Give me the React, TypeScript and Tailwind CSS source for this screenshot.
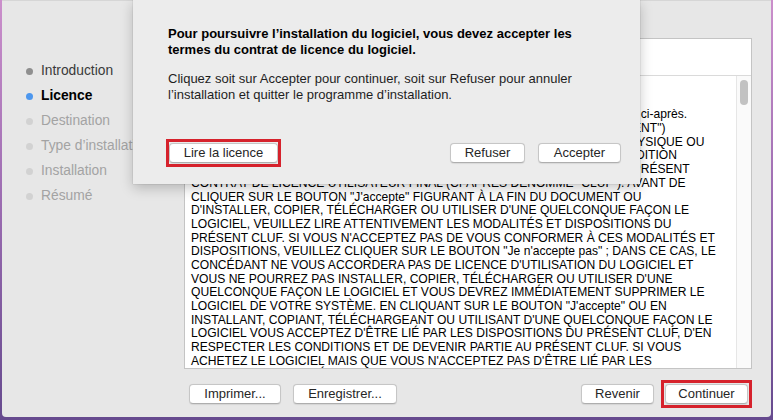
import React from "react";

const steps = [
  { label: "Introduction", state: "done" },
  { label: "Licence", state: "current" },
  { label: "Destination", state: "todo" },
  { label: "Type d’installation", state: "todo" },
  { label: "Installation", state: "todo" },
  { label: "Résumé", state: "todo" },
];

const licenceLines = [
  "CONTRAT DE LICENCE DU LOGICIEL",
  "",
  "Nous vous invitons à lire attentivement, et dans son intégralité, le contrat de licence ci-après.",
  "LE PRÉSENT CONTRAT DE LICENCE (CI-APRÈS, LE \"CONTRAT\" OU \"DOCUMENT\")",
  "CONSTITUE UN ACCORD JURIDIQUE CONCLU ENTRE VOUS (PERSONNE PHYSIQUE OU",
  "MORALE) ET LE CONCÉDANT. L'USAGE DU LOGICIEL EST SOUMIS À LA CONDITION",
  "QUE VOUS ACCEPTIEZ SANS RÉSERVE L'ENSEMBLE DES CONDITIONS DU PRÉSENT",
  "CONTRAT DE LICENCE UTILISATEUR FINAL (CI-APRÈS DÉNOMMÉ \"CLUF\"). AVANT DE",
  "CLIQUER SUR LE BOUTON \"J'accepte\" FIGURANT À LA FIN DU DOCUMENT OU",
  "D'INSTALLER, COPIER, TÉLÉCHARGER OU UTILISER D'UNE QUELCONQUE FAÇON LE",
  "LOGICIEL, VEUILLEZ LIRE ATTENTIVEMENT LES MODALITÉS ET DISPOSITIONS DU",
  "PRÉSENT CLUF. SI VOUS N'ACCEPTEZ PAS DE VOUS CONFORMER À CES MODALITÉS ET",
  "DISPOSITIONS, VEUILLEZ CLIQUER SUR LE BOUTON \"Je n'accepte pas\" ; DANS CE CAS, LE",
  "CONCÉDANT NE VOUS ACCORDERA PAS DE LICENCE D'UTILISATION DU LOGICIEL ET",
  "VOUS NE POURREZ PAS INSTALLER, COPIER, TÉLÉCHARGER OU UTILISER D'UNE",
  "QUELCONQUE FAÇON LE LOGICIEL ET VOUS DEVREZ IMMÉDIATEMENT SUPPRIMER LE",
  "LOGICIEL DE VOTRE SYSTÈME. EN CLIQUANT SUR LE BOUTON \"J'accepte\" OU EN",
  "INSTALLANT, COPIANT, TÉLÉCHARGEANT OU UTILISANT D'UNE QUELCONQUE FAÇON LE",
  "LOGICIEL VOUS ACCEPTEZ D'ÊTRE LIÉ PAR LES DISPOSITIONS DU PRÉSENT CLUF, D'EN",
  "RESPECTER LES CONDITIONS ET DE DEVENIR PARTIE AU PRÉSENT CLUF. SI VOUS",
  "ACHETEZ LE LOGICIEL MAIS QUE VOUS N'ACCEPTEZ PAS D'ÊTRE LIÉ PAR LES",
  "DISPOSITIONS DU PRÉSENT CLUF, VOUS POUVEZ LE RETOURNER.",
];

function MacButton({ children, className = "" }: { children: React.ReactNode; className?: string }) {
  return (
    <div
      className={`flex items-center justify-center h-[20px] rounded-[4px] bg-white border border-[#c6c6c6] border-b-[#aeaeae] text-[13px] text-[#262626] shadow-[0_0.5px_1px_rgba(0,0,0,0.08)] ${className}`}
    >
      {children}
    </div>
  );
}

export default function App() {
  return (
    <div
      className="w-[773px] h-[420px] bg-gradient-to-b from-[#cb8fcb] via-[#9a6bb0] to-[#664a8e] overflow-hidden"
      style={{ fontFamily: '"Liberation Sans", Arial, sans-serif' }}
    >
      <div className="relative mx-[2px] h-[417px] bg-[#e7e7e7] border-t border-[#d6d6d6] rounded-b-[4px] flex">
        {/* Sidebar */}
        <div className="w-[182px] shrink-0 pt-[58px] pl-[24px]">
          {steps.map((s) => (
            <div key={s.label} className="h-[25px] flex items-center gap-[8px] whitespace-nowrap">
              <span
                className={`w-[7px] h-[7px] rounded-full ${
                  s.state === "done" ? "bg-[#8f8f8f]" : s.state === "current" ? "bg-[#4d97ee]" : "bg-[#d2d2d2]"
                }`}
              />
              <span
                className={`text-[13.8px] ${
                  s.state === "done"
                    ? "text-[#3a3a3a]"
                    : s.state === "current"
                    ? "text-black font-bold"
                    : "text-[#a3a3a3]"
                }`}
              >
                {s.label}
              </span>
            </div>
          ))}
        </div>

        {/* Main */}
        <div className="flex-1 pt-[37px] pr-[19px] flex flex-col">
          <div className="h-[331px] bg-white border border-[#c4c4c4] flex flex-col">
            <div className="h-[37px] border-b border-[#dadada]" />
            <div className="flex-1 flex min-h-0">
              <div className="flex-1 overflow-hidden pl-[6px] pt-[5px] text-[12.1px] leading-[13.7px] text-black">
                {licenceLines.map((l, i) => (
                  <div key={i} className="whitespace-nowrap h-[13.7px]">
                    {l}
                  </div>
                ))}
              </div>
              <div className="w-[15px] bg-[#fafafa] border-l border-[#e6e6e6] pt-[4px] flex justify-center">
                <div className="w-[8px] h-[25px] rounded-full bg-[#c2c2c2]" />
              </div>
            </div>
          </div>

          <div className="mt-[11px] flex items-center">
            <MacButton className="w-[92px] ml-[5px]">Imprimer...</MacButton>
            <MacButton className="w-[104px] ml-[12px]">Enregistrer...</MacButton>
            <MacButton className="w-[73px] ml-auto">Revenir</MacButton>
            <div className="ml-[7px] border-[3px] border-[#d6222c] px-[1px] py-[1px]">
              <MacButton className="w-[83px]">Continuer</MacButton>
            </div>
          </div>
        </div>

        {/* Sheet */}
        <div className="absolute left-[131px] top-[-1px] w-[507px] h-[184px] bg-[#ececec] shadow-[0_4px_12px_rgba(0,0,0,0.22),0_0_1px_rgba(0,0,0,0.3)] flex flex-col pl-[35px] pr-[19px] pt-[26px] pb-[17px]">
          <div className="text-[13px] leading-[16px] font-bold text-black">
            <div>Pour poursuivre l’installation du logiciel, vous devez accepter les</div>
            <div>termes du contrat de licence du logiciel.</div>
          </div>
          <div className="mt-[13px] text-[13px] leading-[16px] text-[#1e1e1e]">
            <div>Cliquez soit sur Accepter pour continuer, soit sur Refuser pour annuler</div>
            <div>l’installation et quitter le programme d’installation.</div>
          </div>
          <div className="mt-auto flex items-center -ml-[2px]">
            <div className="border-[3px] border-[#d6222c] py-[1px] px-0">
              <MacButton className="w-[109px]">Lire la licence</MacButton>
            </div>
            <MacButton className="w-[75px] ml-auto">Refuser</MacButton>
            <MacButton className="w-[83px] ml-[13px]">Accepter</MacButton>
          </div>
        </div>
      </div>
    </div>
  );
}
